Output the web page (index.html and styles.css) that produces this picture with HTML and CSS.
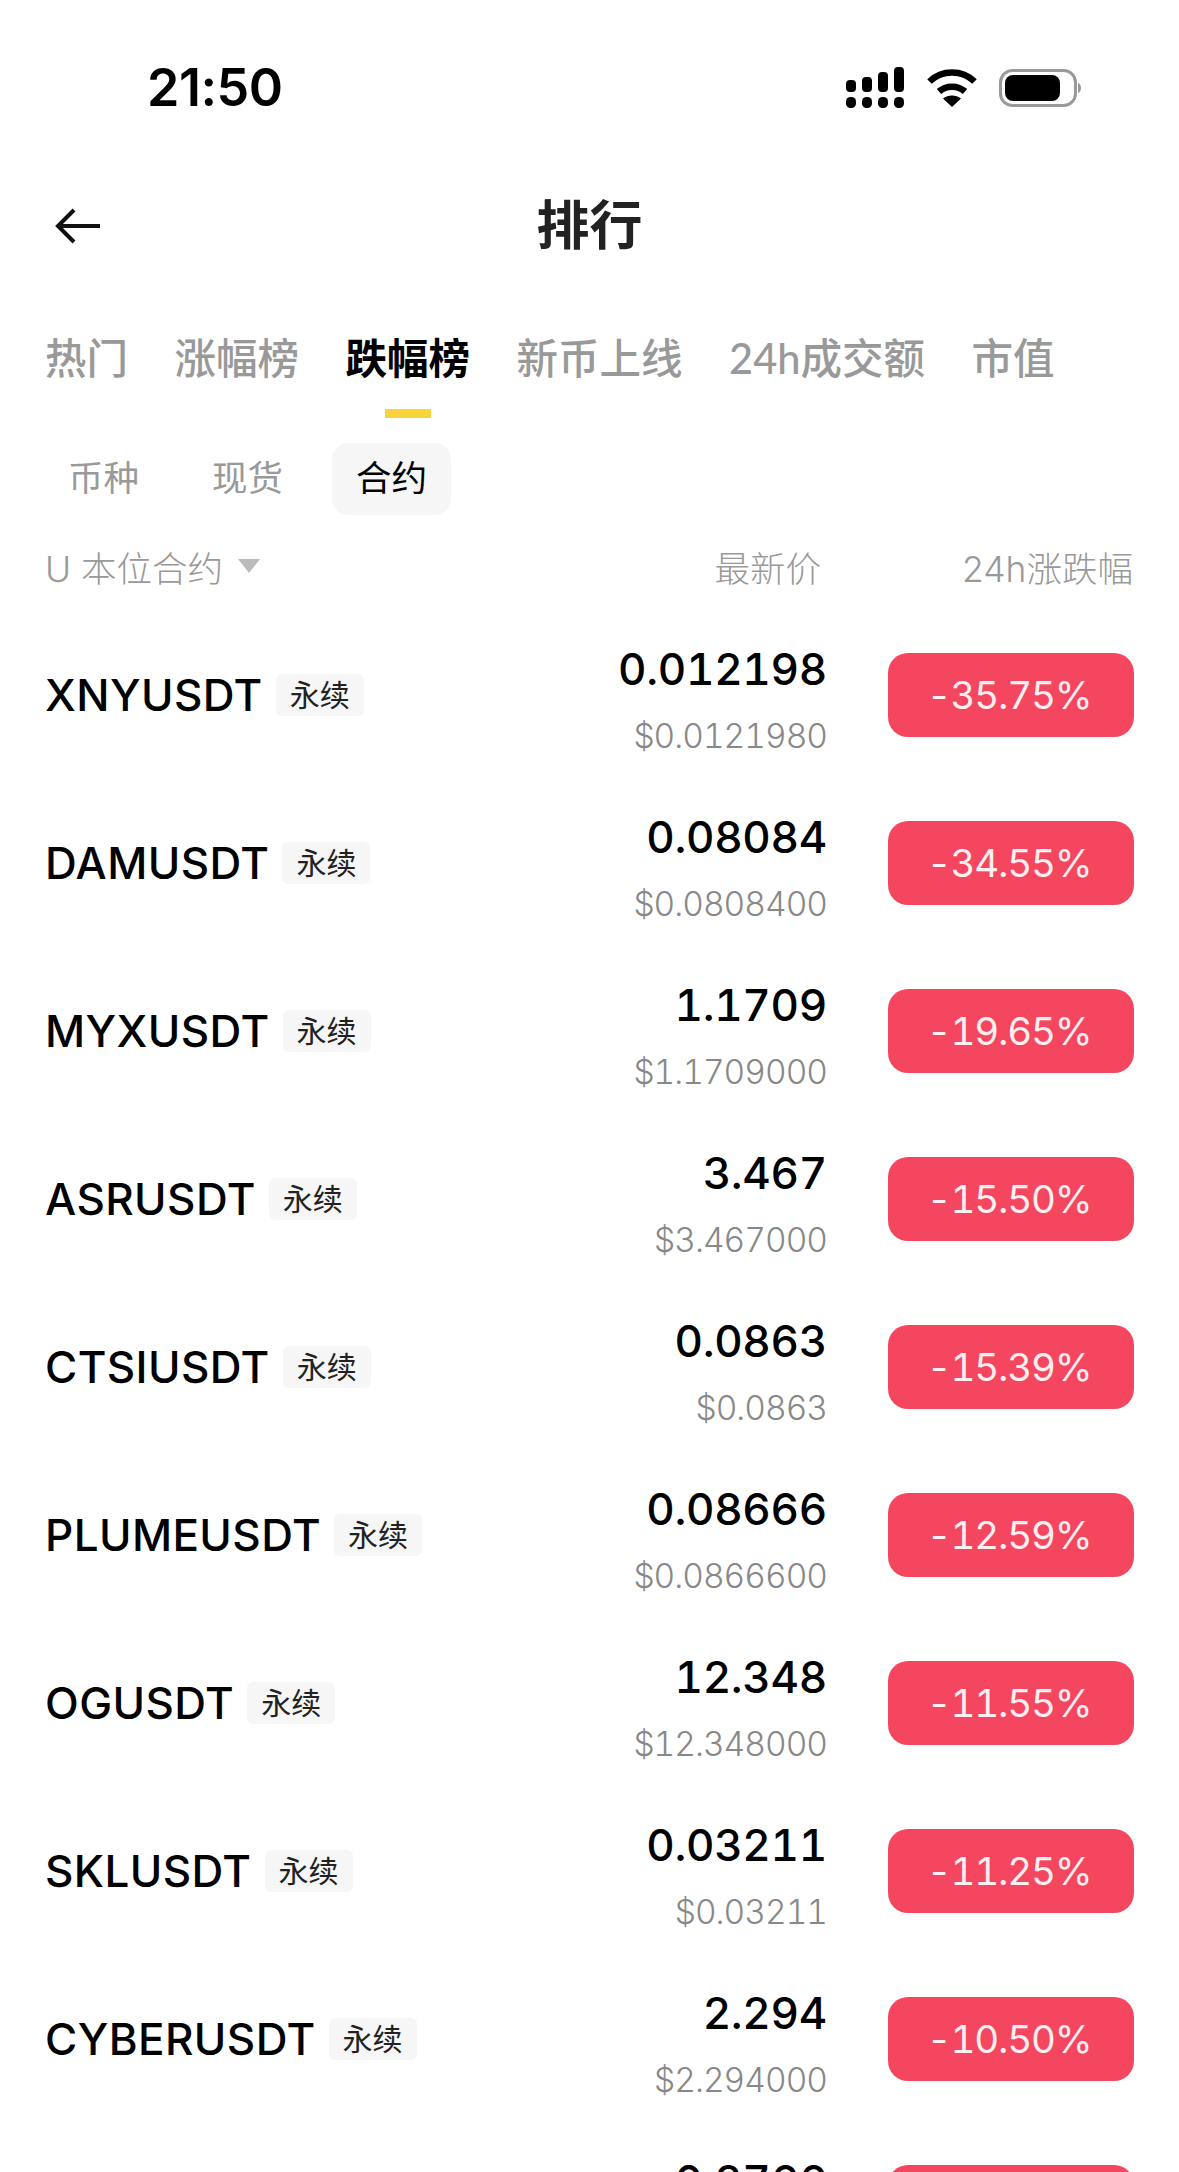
FILE: index.html
```html
<!DOCTYPE html>
<html lang="zh">
<head>
<meta charset="utf-8">
<title>排行</title>
<link rel="stylesheet" href="styles.css">
</head>
<body>
<div class="page">
  <div class="status">
    <span class="time">21:50</span>
    <div class="status-icons">
      <svg class="ic-signal" width="58" height="41" viewBox="0 0 58 41"><g fill="#000"><rect x="0" y="13" width="10" height="12" rx="4"/><rect x="16" y="10" width="10" height="15" rx="4"/><rect x="32" y="5" width="10" height="20" rx="4"/><rect x="48" y="0" width="10" height="25" rx="4"/><rect x="0" y="30" width="10" height="11" rx="4.5"/><rect x="16" y="30" width="10" height="11" rx="4.5"/><rect x="32" y="30" width="10" height="11" rx="4.5"/><rect x="48" y="30" width="10" height="11" rx="4.5"/></g></svg>
      <svg class="ic-wifi" width="50" height="38" viewBox="0 0 50 38"><g fill="none" stroke="#000" stroke-width="6.5"><path d="M2.5 12.5C15 0.5 35 0.5 47.5 12.5"/><path d="M12 22.5C19 16 31 16 38 22.5"/></g><path d="M25 38L16 29.5C21 25.5 29 25.5 34 29.5Z" fill="#000"/></svg>
      <svg class="ic-batt" width="82" height="38" viewBox="0 0 82 38"><rect x="1.5" y="1.5" width="75" height="35" rx="12" fill="none" stroke="#999" stroke-width="3"/><rect x="6" y="6" width="55" height="26" rx="8" fill="#000"/><path d="M79 13.5C81 15 82 17 82 19C82 21 81 23 79 24.5Z" fill="#999"/></svg>
    </div>
  </div>
  <div class="nav">
    <svg class="back" width="46" height="36" viewBox="0 0 46 36"><path d="M19 2L3 18L19 34M3 18H45" fill="none" stroke="#111" stroke-width="4"/></svg>
    <h1 class="title">排行</h1>
  </div>
  <div class="tabs">
    <span class="tab">热门</span>
    <span class="tab">涨幅榜</span>
    <span class="tab tab-on">跌幅榜</span>
    <span class="tab">新币上线</span>
    <span class="tab">24h成交额</span>
    <span class="tab">市值</span>
  </div>
  <div class="subtabs">
    <span class="sub">币种</span>
    <span class="sub">现货</span>
    <span class="sub sub-on">合约</span>
  </div>
  <div class="head">
    <div class="head-l"><span>U 本位合约</span><i class="tri"></i></div>
    <span class="head-p">最新价</span>
    <span class="head-c">24h涨跌幅</span>
  </div>
  <div class="list">
    <div class="row"><div class="name"><b>XNYUSDT</b><span class="tag">永续</span></div><div class="price"><b>0.012198</b><span>$0.0121980</span></div><div class="chg">-35.75%</div></div>
    <div class="row"><div class="name"><b>DAMUSDT</b><span class="tag">永续</span></div><div class="price"><b>0.08084</b><span>$0.0808400</span></div><div class="chg">-34.55%</div></div>
    <div class="row"><div class="name"><b>MYXUSDT</b><span class="tag">永续</span></div><div class="price"><b>1.1709</b><span>$1.1709000</span></div><div class="chg">-19.65%</div></div>
    <div class="row"><div class="name"><b>ASRUSDT</b><span class="tag">永续</span></div><div class="price"><b>3.467</b><span>$3.467000</span></div><div class="chg">-15.50%</div></div>
    <div class="row"><div class="name"><b>CTSIUSDT</b><span class="tag">永续</span></div><div class="price"><b>0.0863</b><span>$0.0863</span></div><div class="chg">-15.39%</div></div>
    <div class="row"><div class="name"><b>PLUMEUSDT</b><span class="tag">永续</span></div><div class="price"><b>0.08666</b><span>$0.0866600</span></div><div class="chg">-12.59%</div></div>
    <div class="row"><div class="name"><b>OGUSDT</b><span class="tag">永续</span></div><div class="price"><b>12.348</b><span>$12.348000</span></div><div class="chg">-11.55%</div></div>
    <div class="row"><div class="name"><b>SKLUSDT</b><span class="tag">永续</span></div><div class="price"><b>0.03211</b><span>$0.03211</span></div><div class="chg">-11.25%</div></div>
    <div class="row"><div class="name"><b>CYBERUSDT</b><span class="tag">永续</span></div><div class="price"><b>2.294</b><span>$2.294000</span></div><div class="chg">-10.50%</div></div>
    <div class="row"><div class="name"></div><div class="price"><b>0.2766</b><span>&nbsp;</span></div><div class="chg"></div></div>
  </div>
</div>
</body>
</html>
```
FILE: styles.css
```css
* { box-sizing: border-box; margin: 0; padding: 0; }
html, body { background: #fff; }
body { font-family: Inter, "Noto Sans CJK SC", sans-serif; overflow: hidden; }
.page { width: 1179px; height: 2172px; overflow: hidden; background: #fff; }

.status { height: 130px; padding: 58px 98px 0 147px; display: flex; justify-content: space-between; align-items: flex-start; }
.time { font-family: Inter, sans-serif; font-size: 52px; font-weight: 600; line-height: 60px; color: #000; letter-spacing: -0.5px; }
.status-icons { display: flex; align-items: center; gap: 23px; padding-top: 9px; }
.ic-wifi { margin-right: -1px; }

.nav { height: 100px; margin-top: 46px; position: relative; display: flex; align-items: center; justify-content: center; }
.back { position: absolute; left: 55px; top: 32px; }
.title { font-size: 53px; font-weight: 700; color: #222; line-height: 70px; }

.tabs { display: flex; gap: 46.5px; padding: 0 45px; margin-top: 50px; height: 64px; align-items: center; font-family: Lato, "Noto Sans CJK SC", sans-serif; }
.tab { font-size: 41.5px; font-weight: 500; color: #999; line-height: 64px; white-space: nowrap; position: relative; }
.tab-on { color: #000; font-weight: 700; }
.tab-on::after { content: ""; position: absolute; left: 39px; bottom: -28px; width: 46px; height: 9px; background: #f8d33a; }

.subtabs { display: flex; gap: 25px; padding: 0 44px; margin-top: 53px; }
.sub { width: 119px; height: 72px; border-radius: 16px; font-size: 35.5px; line-height: 72px; text-align: center; color: #999; }
.sub-on { background: #f6f6f6; color: #000; }

.head { display: flex; align-items: center; padding: 0 46px 0 45px; margin-top: 21px; height: 60px; font-size: 35.5px; color: #999; font-weight: 300; }
.head-l { display: flex; align-items: center; gap: 15px; width: 621px; }
.tri { width: 0; height: 0; border-left: 11px solid transparent; border-right: 11px solid transparent; border-top: 14px solid #bbb; }
.head-p { width: 155px; text-align: right; }
.head-c { flex: 1; text-align: right; }

.list { margin-top: 15px; }
.row { height: 168px; padding: 0 45px; display: flex; align-items: center; }
.name { flex: 1; display: flex; align-items: center; gap: 13px; }
.name b { font-size: 44px; font-weight: 500; color: #000; line-height: 52px; letter-spacing: 0.4px; }
.tag { background: #f6f6f6; border-radius: 6px; height: 42px; padding: 0 14px; font-size: 30px; line-height: 42px; color: #222; }
.price { width: 340px; display: flex; flex-direction: column; align-items: flex-end; margin-right: 61px; gap: 21px; padding-top: 9px; font-variant-numeric: tabular-nums; }
.price b { font-size: 44px; font-weight: 500; color: #000; line-height: 52px; letter-spacing: -0.3px; }
.price span { font-size: 33.5px; font-weight: 300; color: #888; line-height: 40px; letter-spacing: -1px; }
.chg { width: 246px; height: 84px; padding-right: 4px; background: #f4475f; border-radius: 20px; color: #fdeef0; font-size: 38.5px; line-height: 84px; text-align: center; font-weight: 400; font-variant-numeric: tabular-nums; letter-spacing: -1.2px; }
```
